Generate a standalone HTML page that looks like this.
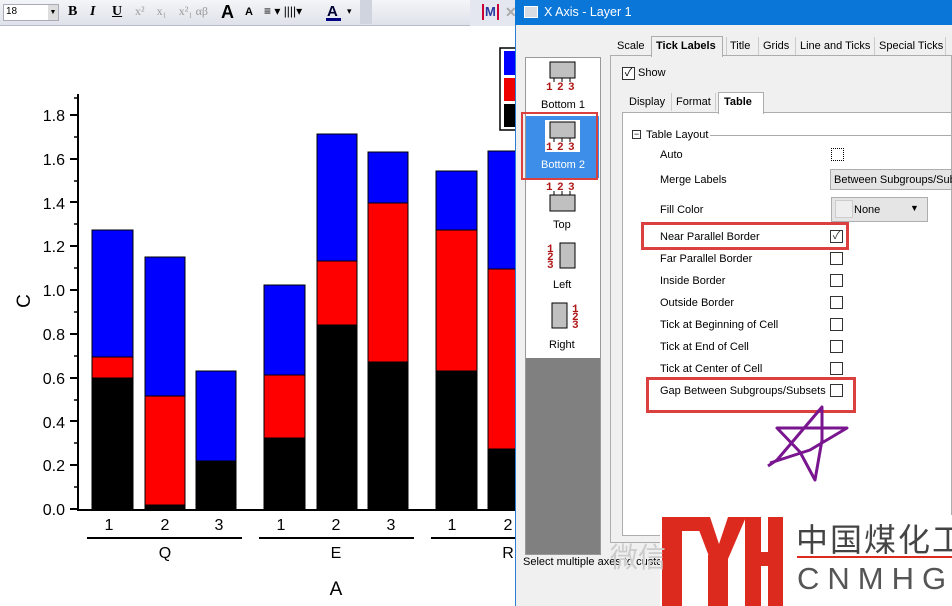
<!DOCTYPE html>
<html><head><meta charset="utf-8"><style>
*{margin:0;padding:0;box-sizing:border-box}
body{width:952px;height:606px;overflow:hidden;background:#fff;position:relative;font-family:"Liberation Sans","Noto Sans CJK SC",sans-serif}
.a{position:absolute}
.t{position:absolute;font-size:11px;color:#000;white-space:nowrap;font-family:"Liberation Sans",sans-serif}
.cb{position:absolute;width:13px;height:13px;border:1px solid #333;background:#fff}
</style></head><body>
<div class="a" style="left:0;top:0;width:515px;height:26px;background:linear-gradient(#f4f5f8,#dfe2ea);border-bottom:1px solid #b8bcc8"></div>
<div class="a" style="left:3px;top:4px;width:56px;height:17px;background:#fff;border:1px solid #aab"></div>
<div class="t" style="left:6px;top:6px;font-size:10px">18</div>
<div class="a" style="left:48px;top:5px;width:10px;height:15px;background:#ddd;font-size:7px;text-align:center;line-height:15px">▼</div>
<div class="a" style="left:68px;top:4px;font:bold 14px 'Liberation Serif',serif">B</div>
<div class="a" style="left:90px;top:4px;font:italic bold 14px 'Liberation Serif',serif">I</div>
<div class="a" style="left:112px;top:4px;font:bold 14px 'Liberation Serif',serif;text-decoration:underline">U</div>
<div class="a" style="left:135px;top:4px;font:12px 'Liberation Serif',serif;color:#999">x²&nbsp;&nbsp;&nbsp; x₁&nbsp;&nbsp;&nbsp; x²₁ αβ</div>
<div class="a" style="left:221px;top:2px;font:bold 18px 'Liberation Sans',sans-serif">A</div>
<div class="a" style="left:245px;top:6px;font:bold 11px 'Liberation Sans',sans-serif">A</div>
<div class="a" style="left:264px;top:4px;font:12px sans-serif">≡ ▾ ||||▾</div>
<div class="a" style="left:327px;top:3px;font:bold 15px sans-serif;color:#003">A</div>
<div class="a" style="left:326px;top:18px;width:15px;height:3px;background:#000080"></div>
<div class="a" style="left:347px;top:6px;font-size:9px">▾</div>
<div class="a" style="left:360px;top:0;width:12px;height:24px;background:#d0d4de"></div>
<div class="a" style="left:470px;top:0;width:45px;height:26px;background:#e4e7ef"></div>
<div class="a" style="left:482px;top:4px;font:bold 13px sans-serif;color:#2a3aa0;border-left:2px solid #c03;border-right:2px solid #c03;padding:0 1px;line-height:16px">M</div>
<div class="a" style="left:505px;top:4px;font:bold 14px sans-serif;color:#aaa">✕</div>

<svg class="a" style="left:0;top:0" width="516" height="606">
<g stroke="#000" stroke-width="1">
<rect x="92" y="230" width="41" height="279" fill="#00f"/><rect x="92" y="357" width="41" height="152" fill="#f00"/><rect x="92" y="378" width="41" height="131" fill="#000"/>
<rect x="145" y="257" width="40" height="252" fill="#00f"/><rect x="145" y="396" width="40" height="113" fill="#f00"/><rect x="145" y="505" width="40" height="4" fill="#000"/>
<rect x="196" y="371" width="40" height="138" fill="#00f"/><rect x="196" y="461" width="40" height="48" fill="#000"/>
<rect x="264" y="285" width="41" height="224" fill="#00f"/><rect x="264" y="375" width="41" height="134" fill="#f00"/><rect x="264" y="438" width="41" height="71" fill="#000"/>
<rect x="317" y="134" width="40" height="375" fill="#00f"/><rect x="317" y="261" width="40" height="248" fill="#f00"/><rect x="317" y="325" width="40" height="184" fill="#000"/>
<rect x="368" y="152" width="40" height="357" fill="#00f"/><rect x="368" y="203" width="40" height="306" fill="#f00"/><rect x="368" y="362" width="40" height="147" fill="#000"/>
<rect x="436" y="171" width="41" height="338" fill="#00f"/><rect x="436" y="230" width="41" height="279" fill="#f00"/><rect x="436" y="371" width="41" height="138" fill="#000"/>
<rect x="488" y="151" width="40" height="358" fill="#00f"/><rect x="488" y="269" width="40" height="240" fill="#f00"/><rect x="488" y="449" width="40" height="60" fill="#000"/>
</g>
<g stroke="#000" stroke-width="2" fill="none">
<path d="M78 94V510H516"/>
<path d="M70 509h8M70 465h8M70 421h8M70 378h8M70 334h8M70 290h8M70 246h8M70 202h8M70 159h8M70 115h8"/>
<path d="M74 487h4M74 443h4M74 400h4M74 356h4M74 312h4M74 268h4M74 224h4M74 181h4M74 137h4M74 98h4" stroke-width="1.5"/>
<path d="M87 538H242M259 538H414M431 538H516"/>
</g>
<g font-family="Liberation Sans,sans-serif" font-size="16" fill="#000" text-anchor="end">
<text x="65" y="515">0.0</text><text x="65" y="471">0.2</text><text x="65" y="428">0.4</text><text x="65" y="384">0.6</text><text x="65" y="340">0.8</text><text x="65" y="296">1.0</text><text x="65" y="252">1.2</text><text x="65" y="209">1.4</text><text x="65" y="165">1.6</text><text x="65" y="121">1.8</text>
</g>
<g font-family="Liberation Sans,sans-serif" font-size="16" fill="#000" text-anchor="middle">
<text x="109" y="530">1</text><text x="165" y="530">2</text><text x="219" y="530">3</text>
<text x="281" y="530">1</text><text x="336" y="530">2</text><text x="391" y="530">3</text>
<text x="452" y="530">1</text><text x="508" y="530">2</text>
<text x="165" y="558">Q</text><text x="336" y="558">E</text><text x="508" y="558">R</text>
<text x="336" y="595" font-size="19">A</text>
<text transform="translate(30,301) rotate(-90)" font-size="19">C</text>
</g>
<rect x="500" y="48" width="20" height="82" fill="#fff" stroke="#000" stroke-width="1.5"/>
<rect x="504" y="51" width="14" height="24" fill="#00f"/><rect x="504" y="78" width="14" height="23" fill="#e00"/><rect x="504" y="104" width="14" height="23" fill="#000"/>
</svg>

<div class="a" style="left:515px;top:0;width:437px;height:606px;background:#f0f0f0;border-left:1px solid #2b7cd3"></div>
<div class="a" style="left:515px;top:0;width:437px;height:25px;background:#0a76d8"></div>
<div class="a" style="left:524px;top:6px;width:14px;height:12px;background:#d8dde4;border:1px solid #fff"></div>
<div class="t" style="left:544px;top:5px;color:#fff;font-size:12.5px">X Axis - Layer 1</div>

<div class="a" style="left:525px;top:57px;width:76px;height:498px;background:#fff;border:1px solid #999"></div>
<div class="a" style="left:526px;top:358px;width:74px;height:196px;background:#808080"></div>
<div class="a" style="left:526px;top:116px;width:73px;height:62px;background:#3c8ee8"></div>
<div class="a" style="left:521px;top:112px;width:77px;height:68px;border:2px solid #d9403e"></div>
<svg class="a" style="left:525px;top:57px" width="76" height="300" font-family="Liberation Mono,monospace" font-weight="bold" font-size="11" fill="#b01818">
<rect x="25" y="5" width="25" height="16" fill="#c0c0c0" stroke="#000"/><path d="M29 21v4M37 21v4M45 21v4" stroke="#000"/><text x="21" y="33">1</text><text x="32" y="33">2</text><text x="43" y="33">3</text>
<rect x="20" y="63" width="35" height="32" fill="#fff"/>
<rect x="25" y="65" width="25" height="16" fill="#c0c0c0" stroke="#000"/><path d="M29 81v4M37 81v4M45 81v4" stroke="#000"/><text x="21" y="93">1</text><text x="32" y="93">2</text><text x="43" y="93">3</text>
<text x="21" y="133">1</text><text x="32" y="133">2</text><text x="43" y="133">3</text><path d="M29 134v4M37 134v4M45 134v4" stroke="#000"/><rect x="25" y="138" width="25" height="16" fill="#c0c0c0" stroke="#000"/>
<rect x="35" y="186" width="15" height="25" fill="#c0c0c0" stroke="#000"/><text x="22" y="195">1</text><text x="22" y="203">2</text><text x="22" y="211">3</text>
<rect x="27" y="246" width="15" height="25" fill="#c0c0c0" stroke="#000"/><text x="47" y="255">1</text><text x="47" y="263">2</text><text x="47" y="271">3</text>
</svg>
<div class="t" style="left:541px;top:99px">Bottom 1</div>
<div class="t" style="left:541px;top:159px;color:#fff">Bottom 2</div>
<div class="t" style="left:553px;top:219px">Top</div>
<div class="t" style="left:553px;top:279px">Left</div>
<div class="t" style="left:549px;top:339px">Right</div>
<div class="t" style="left:523px;top:556px">Select multiple axes to custom</div>

<div class="a" style="left:610px;top:55px;width:342px;height:488px;border:1px solid #adadad;background:#f0f0f0"></div>
<div class="a" style="left:651px;top:36px;width:72px;height:21px;background:#f0f0f0;border:1px solid #adadad;border-bottom:none"></div>
<div class="t" style="left:617px;top:40px">Scale</div>
<div class="t" style="left:656px;top:40px;font-weight:bold">Tick Labels</div>
<div class="t" style="left:730px;top:40px">Title</div>
<div class="t" style="left:763px;top:40px">Grids</div>
<div class="t" style="left:800px;top:40px">Line and Ticks</div>
<div class="t" style="left:879px;top:40px">Special Ticks</div>
<div class="a" style="left:726px;top:37px;width:1px;height:18px;background:#ccc"></div>
<div class="a" style="left:758px;top:37px;width:1px;height:18px;background:#ccc"></div>
<div class="a" style="left:795px;top:37px;width:1px;height:18px;background:#ccc"></div>
<div class="a" style="left:874px;top:37px;width:1px;height:18px;background:#ccc"></div>
<div class="a" style="left:945px;top:37px;width:1px;height:18px;background:#ccc"></div>
<div class="cb" style="left:622px;top:67px;font-size:11px;line-height:10px;text-align:center">✓</div>
<div class="t" style="left:638px;top:67px">Show</div>
<div class="a" style="left:622px;top:112px;width:330px;height:424px;background:#fff;border:1px solid #adadad"></div>
<div class="a" style="left:718px;top:92px;width:46px;height:22px;background:#fff;border:1px solid #adadad;border-bottom:none"></div>
<div class="t" style="left:629px;top:96px">Display</div>
<div class="t" style="left:676px;top:96px">Format</div>
<div class="t" style="left:724px;top:96px;font-weight:bold">Table</div>
<div class="a" style="left:671px;top:93px;width:1px;height:18px;background:#ccc"></div>
<div class="a" style="left:715px;top:93px;width:1px;height:18px;background:#ccc"></div>
<div class="a" style="left:710px;top:135px;width:242px;height:1px;background:#aaa"></div>
<div class="a" style="left:632px;top:130px;width:9px;height:9px;border:1px solid #333;font-size:9px;line-height:6px;text-align:center">−</div>
<div class="t" style="left:646px;top:129px">Table Layout</div>
<div class="t" style="left:660px;top:149px">Auto</div>
<div class="cb" style="left:831px;top:148px;border:1px dotted #000"></div>
<div class="t" style="left:660px;top:174px">Merge Labels</div>
<div class="a" style="left:830px;top:169px;width:122px;height:21px;background:#e5e5e5;border:1px solid #adadad"></div>
<div class="t" style="left:834px;top:174px">Between Subgroups/Subs</div>
<div class="t" style="left:660px;top:204px">Fill Color</div>
<div class="a" style="left:831px;top:197px;width:97px;height:25px;background:#e5e5e5;border:1px solid #adadad"></div>
<div class="a" style="left:835px;top:200px;width:18px;height:18px;background:#eee;border:1px solid #ccc"></div>
<div class="t" style="left:854px;top:204px">None</div>
<div class="a" style="left:910px;top:203px;font-size:9px">▼</div>
<div class="t" style="left:660px;top:231px">Near Parallel Border</div>
<div class="cb" style="left:830px;top:230px;font-size:11px;line-height:10px;text-align:center;color:#333">✓</div>
<div class="t" style="left:660px;top:253px">Far Parallel Border</div><div class="cb" style="left:830px;top:252px"></div>
<div class="t" style="left:660px;top:275px">Inside Border</div><div class="cb" style="left:830px;top:274px"></div>
<div class="t" style="left:660px;top:297px">Outside Border</div><div class="cb" style="left:830px;top:296px"></div>
<div class="t" style="left:660px;top:319px">Tick at Beginning of Cell</div><div class="cb" style="left:830px;top:318px"></div>
<div class="t" style="left:660px;top:341px">Tick at End of Cell</div><div class="cb" style="left:830px;top:340px"></div>
<div class="t" style="left:660px;top:363px">Tick at Center of Cell</div><div class="cb" style="left:830px;top:362px"></div>
<div class="t" style="left:660px;top:385px">Gap Between Subgroups/Subsets</div><div class="cb" style="left:830px;top:384px"></div>
<div class="a" style="left:641px;top:222px;width:208px;height:28px;border:3px solid #d9403e"></div>
<div class="a" style="left:646px;top:377px;width:210px;height:36px;border:3px solid #d9403e"></div>
<svg class="a" style="left:760px;top:400px" width="100" height="90"><path d="M8 66L17 60L62 7L62 40L55 80L40 52L17 28L87 28L50 50L10 63" fill="none" stroke="#7a1590" stroke-width="3" stroke-linejoin="round"/></svg>

<div class="a" style="left:660px;top:515px;width:292px;height:91px;background:#fff"></div>
<svg class="a" style="left:660px;top:515px" width="130" height="91"><path d="M2 2h20v89H2zM2 2h38v14H2zM34 2h16l14 42h-14zM68 2h18l-18 42h-14zM48 40h20v51H48zM85 2h16v89H85zM101 37h8v14H101zM108 2h15v89h-15z" fill="#dd2a1f"/></svg>
<div class="a" style="left:796px;top:515px;font:32px 'Noto Sans CJK SC',sans-serif;color:#444;letter-spacing:2px;white-space:nowrap">中国煤化工</div>
<div class="a" style="left:797px;top:556px;width:155px;height:2px;background:#dd2a1f"></div>
<div class="a" style="left:797px;top:561px;font:31px 'Liberation Sans',sans-serif;color:#555;letter-spacing:8px;white-space:nowrap">CNMHG</div>
<div class="a" style="left:610px;top:536px;font:28px 'Noto Sans CJK SC',sans-serif;color:#ccc">微信</div>
</body></html>
